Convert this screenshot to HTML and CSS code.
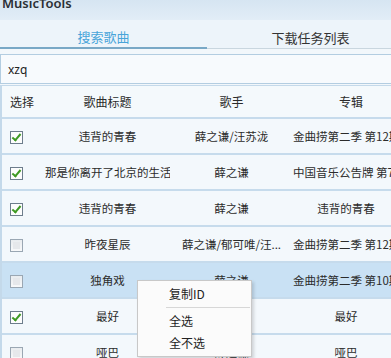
FILE: index.html
```html
<!DOCTYPE html>
<html>
<head>
<meta charset="utf-8">
<link rel="stylesheet" href="styles.css">
</head>
<body>
<div class="app">
  <div class="titlebar"><span class="title">MusicTools</span></div>
  <div class="tabs">
    <div class="tab active">搜索歌曲</div>
    <div class="tab">下载任务列表</div>
  </div>
  <div class="search"><div class="input">xzq</div></div>
  <div class="grid">
    <div class="row head">
      <div class="c1">选择</div>
      <div class="c2">歌曲标题</div>
      <div class="c3">歌手</div>
      <div class="c4 h4">专辑</div>
    </div>
    <div class="row">
      <div class="c1"><span class="cb on"></span></div>
      <div class="c2">违背的青春</div>
      <div class="c3">薛之谦/汪苏泷</div>
      <div class="c4">金曲捞第二季 第12期</div>
    </div>
    <div class="row">
      <div class="c1"><span class="cb on"></span></div>
      <div class="c2">那是你离开了北京的生活</div>
      <div class="c3">薛之谦</div>
      <div class="c4">中国音乐公告牌 第7期</div>
    </div>
    <div class="row">
      <div class="c1"><span class="cb on"></span></div>
      <div class="c2">违背的青春</div>
      <div class="c3">薛之谦</div>
      <div class="c4">违背的青春</div>
    </div>
    <div class="row">
      <div class="c1"><span class="cb"></span></div>
      <div class="c2">昨夜星辰</div>
      <div class="c3">薛之谦/郁可唯/汪...</div>
      <div class="c4">金曲捞第二季 第12期</div>
    </div>
    <div class="row sel">
      <div class="c1"><span class="cb"></span></div>
      <div class="c2">独角戏</div>
      <div class="c3">薛之谦</div>
      <div class="c4">金曲捞第二季 第10期</div>
    </div>
    <div class="row">
      <div class="c1"><span class="cb on"></span></div>
      <div class="c2">最好</div>
      <div class="c3">薛之谦</div>
      <div class="c4">最好</div>
    </div>
    <div class="row">
      <div class="c1"><span class="cb"></span></div>
      <div class="c2">哑巴</div>
      <div class="c3">薛之谦</div>
      <div class="c4">哑巴</div>
    </div>
  </div>
  <div class="menu">
    <div class="item">复制ID</div>
    <div class="sep"></div>
    <div class="item">全选</div>
    <div class="item">全不选</div>
  </div>
</div>
</body>
</html>
```

FILE: styles.css
```css
html, body {
  margin: 0;
  padding: 0;
  overflow: hidden;
}
body {
  width: 391px;
  height: 358px;
  background: #f2f7fb;
  font-family: "Noto Sans CJK SC", "Noto Sans", sans-serif;
  color: #2b2b2b;
  font-size: 12px;
}
.app {
  position: relative;
  width: 399px;
  height: 358px;
  overflow: hidden;
}
.titlebar {
  height: 20px;
  background: linear-gradient(#d6e5f2, #e2edf7);
  overflow: hidden;
  padding-left: 2px;
}
.title {
  display: block;
  font-family: "Noto Sans", sans-serif;
  font-weight: 600;
  font-size: 13px;
  line-height: 14px;
  margin-top: -4px;
  color: #2a2f35;
}
.tabs {
  display: grid;
  grid-template-columns: 207px 207px;
  height: 28px;
  background: #edf4fa;
  border-bottom: 1px solid #c9d6df;
}
.tab {
  display: flex;
  align-items: center;
  justify-content: center;
  font-size: 13px;
  color: #333;
  padding-top: 6px;
}
.tab.active {
  color: #48a4d9;
  border-bottom: 2px solid #79a8c6;
  margin-bottom: -1px;
}
.search {
  padding-top: 5px;
  background: #f2f7fb;
}
.input {
  height: 28px;
  border: 1px solid #b3cde1;
  border-right: none;
  background: #f7fafd;
  display: flex;
  align-items: center;
  padding-left: 7px;
  font-family: "Noto Sans", sans-serif;
  font-size: 12px;
  color: #222;
}
.grid {
  margin-top: 1px;
  border-left: 2px solid #c4d9ea;
  border-top: 1px solid #c4d9ea;
  font-size: 11.5px;
}
.row {
  display: grid;
  grid-template-columns: 43px 125px 123px 106px;
  height: 34px;
  border-bottom: 2px solid #c6dbec;
  align-items: center;
  background: #f3f8fc;
}
.row.head {
  height: 31px;
  background: #f4f9fc;
  font-size: 12px;
}
.row.sel {
  background: #c9e1f4;
}
.c1 {
  padding-left: 8px;
  display: flex;
  align-items: center;
}
.c2, .c3, .c4 {
  text-align: center;
  white-space: nowrap;
  overflow: hidden;
}
.c3 {
  padding: 0 6px;
}
.h4 {
  padding-left: 10px;
}
.cb {
  display: inline-block;
  width: 11px;
  height: 11px;
  border: 1px solid #9aa7b3;
  background: linear-gradient(#e9ecef, #f8f9fa);
  position: relative;
  margin-top: 3px;
}
.cb::before {
  content: "";
  position: absolute;
  left: 2px;
  top: 2px;
  width: 7px;
  height: 7px;
  background: #e6e8eb;
}
.cb.on {
  border-color: #6d7d8c;
  background: #fdfdfd;
}
.cb.on::before {
  background: none;
  left: 3px;
  top: 0px;
  width: 3px;
  height: 7px;
  border: solid #3f9a23;
  border-width: 0 2px 2px 0;
  transform: rotate(40deg);
}
.menu {
  position: absolute;
  left: 137px;
  top: 280px;
  width: 113px;
  padding: 2px 0;
  background: #fbfbfb;
  border: 1px solid #c8c8c8;
  box-shadow: 2px 2px 3px rgba(0, 0, 0, 0.15);
}
.item {
  height: 22px;
  line-height: 22px;
  padding-left: 31px;
  font-size: 12px;
  color: #222;
}
.sep {
  height: 1px;
  background: #d7d7d7;
  margin: 2px 1px 2px 28px;
}
```
